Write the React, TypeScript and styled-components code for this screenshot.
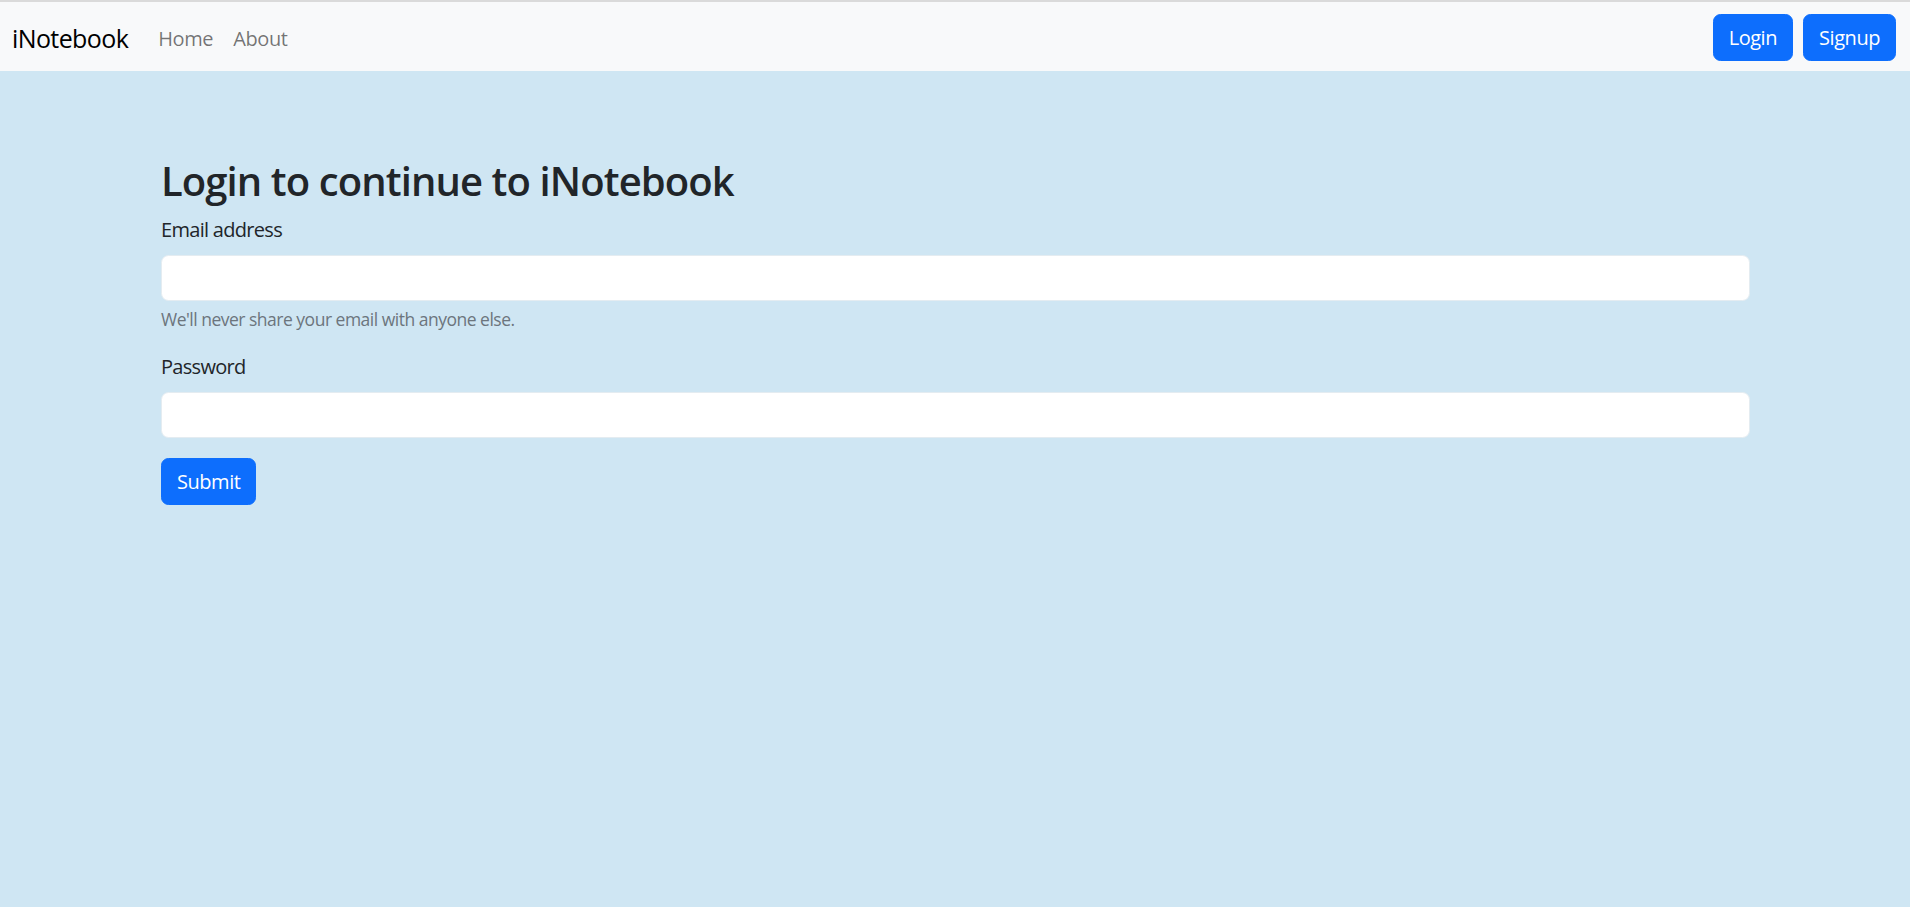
import React from "react";
import styled, { createGlobalStyle } from "styled-components";

const Global = createGlobalStyle`
  html, body { margin: 0; padding: 0; }
  body {
    background: #cfe6f3;
    font-family: "Open Sans", "Noto Sans", Arial, sans-serif;
    color: #212529;
    font-size: 20px;
    line-height: 1.5;
  }
  * { box-sizing: border-box; }
`;

const NavBar = styled.nav`
  display: flex;
  align-items: center;
  justify-content: space-between;
  height: 71px;
  background: #f8f9fa;
  border-top: 2px solid #dadada;
  padding: 1px 14px 0 12px;
`;

const NavLeft = styled.div`
  display: flex;
  align-items: center;
  padding-top: 3px;
`;

const Brand = styled.a`
  font-size: 25px;
  color: #000;
  text-decoration: none;
  margin-right: 20px;
  line-height: 1.5;
  letter-spacing: -0.6px;
`;

const NavLink = styled.a`
  font-size: 20px;
  color: rgba(0, 0, 0, 0.55);
  text-decoration: none;
  padding: 0 10px;
  letter-spacing: -0.4px;
`;

const NavRight = styled.div`
  display: flex;
  gap: 10px;
`;

const Button = styled.button`
  height: 47px;
  padding: 0 15px;
  font-family: inherit;
  font-size: 20px;
  letter-spacing: -0.45px;
  color: #fff;
  background: #0d6efd;
  border: 1px solid #0d6efd;
  border-radius: 7.5px;
  cursor: pointer;
`;

const Main = styled.main`
  padding: 86px 160px 0 161px;
`;

const Heading = styled.h2`
  font-size: 40px;
  font-weight: 600;
  line-height: 48px;
  letter-spacing: -0.9px;
  margin: 0 0 10px;
`;

const Group = styled.div`
  margin-bottom: 20px;
`;

const Label = styled.label`
  display: block;
  font-size: 20px;
  line-height: 30px;
  letter-spacing: -0.7px;
  margin-bottom: 10px;
`;

const Input = styled.input`
  display: block;
  width: 100%;
  height: 46px;
  padding: 0 15px;
  font-size: 20px;
  font-family: inherit;
  background: #fff;
  border: 1px solid #e4ecf1;
  border-radius: 7.5px;
  outline: none;
`;

const Help = styled.div`
  margin-top: 5px;
  font-size: 17.5px;
  line-height: 1.5;
  letter-spacing: -0.5px;
  color: #6c757d;
`;

export default function App() {
  return (
    <>
      <Global />
      <NavBar>
        <NavLeft>
          <Brand href="#">iNotebook</Brand>
          <NavLink href="#">Home</NavLink>
          <NavLink href="#">About</NavLink>
        </NavLeft>
        <NavRight>
          <Button>Login</Button>
          <Button>Signup</Button>
        </NavRight>
      </NavBar>
      <Main>
        <Heading>Login to continue to iNotebook</Heading>
        <form onSubmit={(e) => e.preventDefault()}>
          <Group>
            <Label htmlFor="email">Email address</Label>
            <Input id="email" type="email" />
            <Help>We'll never share your email with anyone else.</Help>
          </Group>
          <Group>
            <Label htmlFor="password">Password</Label>
            <Input id="password" type="password" />
          </Group>
          <Button type="submit">Submit</Button>
        </form>
      </Main>
    </>
  );
}
